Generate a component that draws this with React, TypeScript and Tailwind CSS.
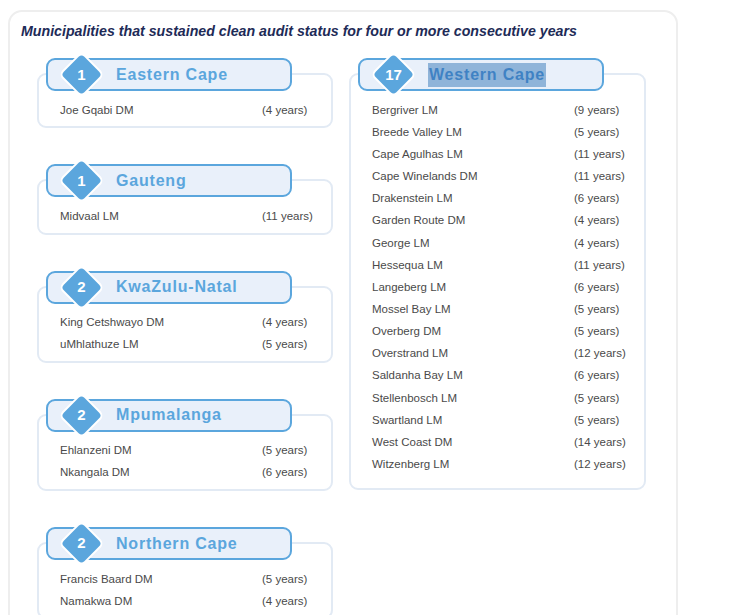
import React from "react";

type Row = [string, string];
type Sec = { n: string; name: string; rows: Row[]; highlight?: boolean };

const left: Sec[] = [
  { n: "1", name: "Eastern Cape", rows: [["Joe Gqabi DM", "(4 years)"]] },
  { n: "1", name: "Gauteng", rows: [["Midvaal LM", "(11 years)"]] },
  {
    n: "2",
    name: "KwaZulu-Natal",
    rows: [
      ["King Cetshwayo DM", "(4 years)"],
      ["uMhlathuze LM", "(5 years)"],
    ],
  },
  {
    n: "2",
    name: "Mpumalanga",
    rows: [
      ["Ehlanzeni DM", "(5 years)"],
      ["Nkangala DM", "(6 years)"],
    ],
  },
  {
    n: "2",
    name: "Northern Cape",
    rows: [
      ["Francis Baard DM", "(5 years)"],
      ["Namakwa DM", "(4 years)"],
    ],
  },
];

const western: Sec = {
  n: "17",
  name: "Western Cape",
  highlight: true,
  rows: [
    ["Bergriver LM", "(9 years)"],
    ["Breede Valley LM", "(5 years)"],
    ["Cape Agulhas LM", "(11 years)"],
    ["Cape Winelands DM", "(11 years)"],
    ["Drakenstein LM", "(6 years)"],
    ["Garden Route DM", "(4 years)"],
    ["George LM", "(4 years)"],
    ["Hessequa LM", "(11 years)"],
    ["Langeberg LM", "(6 years)"],
    ["Mossel Bay LM", "(5 years)"],
    ["Overberg DM", "(5 years)"],
    ["Overstrand LM", "(12 years)"],
    ["Saldanha Bay LM", "(6 years)"],
    ["Stellenbosch LM", "(5 years)"],
    ["Swartland LM", "(5 years)"],
    ["West Coast DM", "(14 years)"],
    ["Witzenberg LM", "(12 years)"],
  ],
};

function Section({ s }: { s: Sec }) {
  return (
    <div className="flex flex-col">
      <div className="relative z-10 ml-[9px] flex h-[33px] w-[246px] items-center rounded-[9px] border-2 border-[#5ba6dd] bg-[#e9f0fa]">
        <div className="relative ml-[17px] flex h-[33px] w-[33px] items-center justify-center">
          <div className="absolute inset-0 rotate-45 rounded-[6px] border-2 border-white bg-[#5ba6dd]" />
          <span className="relative text-[15px] font-bold text-white">{s.n}</span>
        </div>
        <span
          className={
            "ml-[18px] text-[16px] font-bold tracking-[0.8px] " +
            (s.highlight ? "bg-[#8fb4d9] text-[#3f82c4] px-[1px]" : "text-[#5ba6dd]")
          }
        >
          {s.name}
        </span>
      </div>
      <div
        className={
          "-mt-[18px] rounded-[9px] border-2 border-[#e2eaf4] bg-white pl-[21px] pt-[24px] " +
          (s.highlight ? "pb-[12px]" : "pb-[5px]")
        }
      >
        {s.rows.map(([a, b]) => (
          <div key={a} className="grid h-[22.15px] grid-cols-[202px_1fr] items-center text-[11.5px] text-[#4a4a4a]">
            <span>{a}</span>
            <span>{b}</span>
          </div>
        ))}
      </div>
    </div>
  );
}

export default function App() {
  return (
    <div
      className="h-[615px] w-[734px] overflow-hidden bg-white"
      style={{ fontFamily: '"Liberation Sans", Arial, sans-serif' }}
    >
      <div className="ml-[8px] mt-[10px] h-[700px] w-[670px] rounded-[14px] border-2 border-[#eeeeee] pl-[11px] pt-[9px]">
        <div className="text-[14.2px] font-bold italic text-[#1e2b57]">
          Municipalities that sustained clean audit status for four or more consecutive years
        </div>
        <div className="mt-[16px] flex gap-[16px] pl-[16px]">
          <div className="flex w-[296px] flex-col gap-[36px]">
            {left.map((s) => (
              <Section key={s.name} s={s} />
            ))}
          </div>
          <div className="w-[297px]">
            <Section s={western} />
          </div>
        </div>
      </div>
    </div>
  );
}
